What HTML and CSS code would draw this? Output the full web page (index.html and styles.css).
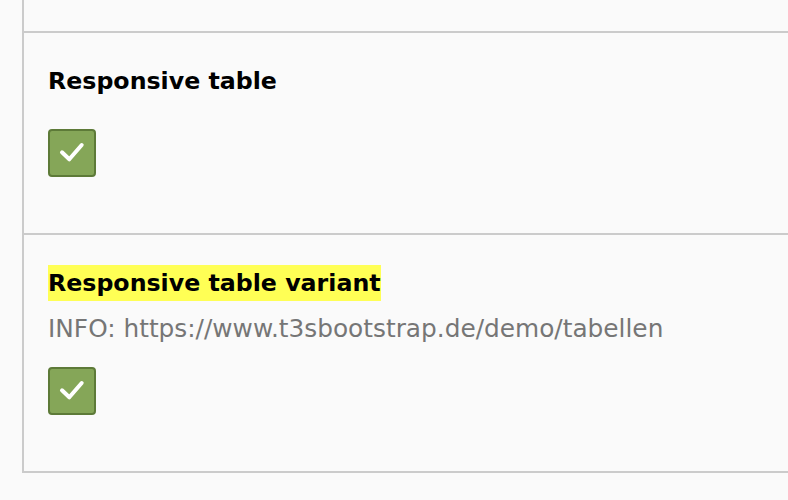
FILE: index.html
```html
<!DOCTYPE html>
<html lang="en">
<head>
<meta charset="utf-8">
<title>Responsive table</title>
<link rel="stylesheet" href="styles.css">
</head>
<body>
<div class="panel">
  <div class="row row-top"></div>
  <div class="row">
    <div class="field-head"><span class="label">Responsive table</span></div>
    <div class="check-wrap">
      <span class="check">
        <svg viewBox="0 0 44 44" width="44" height="44" aria-hidden="true"><polyline points="12,21.3 19.3,28.3 31.7,14" fill="none" stroke="#fff" stroke-width="4" stroke-linecap="round" stroke-linejoin="round"/></svg>
      </span>
    </div>
  </div>
  <div class="row">
    <div class="field-head"><span class="label label-hl">Responsive table variant</span></div>
    <div class="info">INFO: https://www.t3sbootstrap.de/demo/tabellen</div>
    <div class="check-wrap">
      <span class="check">
        <svg viewBox="0 0 44 44" width="44" height="44" aria-hidden="true"><polyline points="12,21.3 19.3,28.3 31.7,14" fill="none" stroke="#fff" stroke-width="4" stroke-linecap="round" stroke-linejoin="round"/></svg>
      </span>
    </div>
  </div>
</div>
</body>
</html>
```
FILE: styles.css
```css
html, body {
  margin: 0;
  padding: 0;
  background: #fafafa;
}
body {
  font-family: "DejaVu Sans", Verdana, sans-serif;
  color: #000;
}
.panel {
  margin-left: 22px;
  border-left: 2px solid #cbcbcb;
  border-bottom: 2px solid #cbcbcb;
}
.row {
  border-top: 2px solid #cbcbcb;
  padding: 30px 24px 56px;
}
.row-top {
  border-top: none;
  height: 31px;
  padding: 0;
}
.field-head {
  padding-bottom: 10px;
  height: 36px;
}
.label {
  display: inline-block;
  font-weight: bold;
  font-size: 23.7px;
  line-height: 36px;
  vertical-align: top;
}
.label-hl {
  background: #ffff55;
}
.info {
  font-size: 24.8px;
  line-height: 36px;
  color: #767676;
  white-space: nowrap;
}
.check-wrap {
  padding-top: 20px;
  height: 48px;
}
.check {
  display: block;
  width: 44px;
  height: 44px;
  border: 2px solid #5d7a38;
  border-radius: 4px;
  background: #85a658;
}
.check svg {
  display: block;
}
```
